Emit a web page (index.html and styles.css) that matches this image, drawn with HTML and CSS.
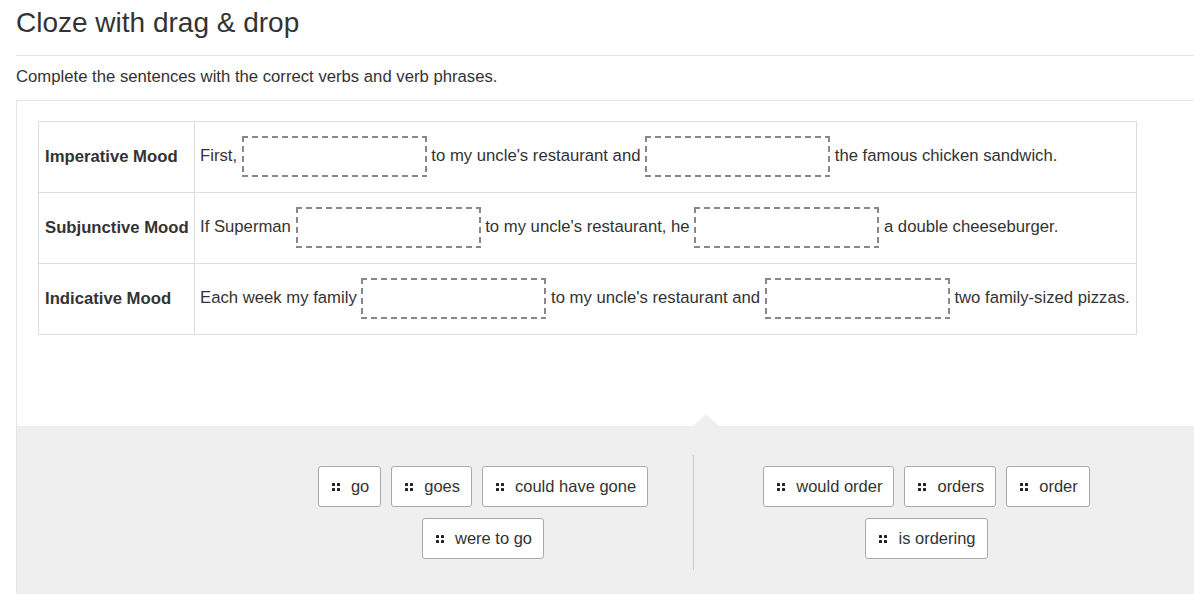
FILE: index.html
```html
<!DOCTYPE html>
<html lang="en">
<head>
  <meta charset="UTF-8">
  <title>Cloze with drag &amp; drop</title>
  <link rel="stylesheet" href="styles.css">
</head>
<body>
  <div class="page">
    <h1 class="title">Cloze with drag &amp; drop</h1>
    <p class="intro">Complete the sentences with the correct verbs and verb phrases.</p>

    <div class="task">
      <div class="task-body">
        <table class="cloze">
          <colgroup>
            <col class="label-col">
            <col>
          </colgroup>
          <tr>
            <td class="label">Imperative Mood</td>
            <td class="sentence">First, <span class="zone"></span> to my uncle's restaurant and <span class="zone"></span> the famous chicken sandwich.</td>
          </tr>
          <tr>
            <td class="label">Subjunctive Mood</td>
            <td class="sentence">If Superman <span class="zone"></span> to my uncle's restaurant, he <span class="zone"></span> a double cheeseburger.</td>
          </tr>
          <tr>
            <td class="label">Indicative Mood</td>
            <td class="sentence">Each week my family <span class="zone"></span> to my uncle's restaurant and <span class="zone"></span> two family-sized pizzas.</td>
          </tr>
        </table>
      </div>

      <div class="pool-area">
        <div class="pool pool-left">
          <span class="chip"><svg class="grip" width="8" height="9" viewBox="0 0 8 9"><rect x="0" y="1" width="3" height="3" rx="0.6"/><rect x="5" y="1" width="3" height="3" rx="0.6"/><rect x="0" y="6" width="3" height="3" rx="0.6"/><rect x="5" y="6" width="3" height="3" rx="0.6"/></svg>go</span>
          <span class="chip"><svg class="grip" width="8" height="9" viewBox="0 0 8 9"><rect x="0" y="1" width="3" height="3" rx="0.6"/><rect x="5" y="1" width="3" height="3" rx="0.6"/><rect x="0" y="6" width="3" height="3" rx="0.6"/><rect x="5" y="6" width="3" height="3" rx="0.6"/></svg>goes</span>
          <span class="chip"><svg class="grip" width="8" height="9" viewBox="0 0 8 9"><rect x="0" y="1" width="3" height="3" rx="0.6"/><rect x="5" y="1" width="3" height="3" rx="0.6"/><rect x="0" y="6" width="3" height="3" rx="0.6"/><rect x="5" y="6" width="3" height="3" rx="0.6"/></svg>could have gone</span>
          <span class="chip"><svg class="grip" width="8" height="9" viewBox="0 0 8 9"><rect x="0" y="1" width="3" height="3" rx="0.6"/><rect x="5" y="1" width="3" height="3" rx="0.6"/><rect x="0" y="6" width="3" height="3" rx="0.6"/><rect x="5" y="6" width="3" height="3" rx="0.6"/></svg>were to go</span>
        </div>
        <div class="pool pool-right">
          <span class="chip"><svg class="grip" width="8" height="9" viewBox="0 0 8 9"><rect x="0" y="1" width="3" height="3" rx="0.6"/><rect x="5" y="1" width="3" height="3" rx="0.6"/><rect x="0" y="6" width="3" height="3" rx="0.6"/><rect x="5" y="6" width="3" height="3" rx="0.6"/></svg>would order</span>
          <span class="chip"><svg class="grip" width="8" height="9" viewBox="0 0 8 9"><rect x="0" y="1" width="3" height="3" rx="0.6"/><rect x="5" y="1" width="3" height="3" rx="0.6"/><rect x="0" y="6" width="3" height="3" rx="0.6"/><rect x="5" y="6" width="3" height="3" rx="0.6"/></svg>orders</span>
          <span class="chip"><svg class="grip" width="8" height="9" viewBox="0 0 8 9"><rect x="0" y="1" width="3" height="3" rx="0.6"/><rect x="5" y="1" width="3" height="3" rx="0.6"/><rect x="0" y="6" width="3" height="3" rx="0.6"/><rect x="5" y="6" width="3" height="3" rx="0.6"/></svg>order</span>
          <span class="chip"><svg class="grip" width="8" height="9" viewBox="0 0 8 9"><rect x="0" y="1" width="3" height="3" rx="0.6"/><rect x="5" y="1" width="3" height="3" rx="0.6"/><rect x="0" y="6" width="3" height="3" rx="0.6"/><rect x="5" y="6" width="3" height="3" rx="0.6"/></svg>is ordering</span>
        </div>
      </div>
    </div>
  </div>
</body>
</html>
```

FILE: styles.css
```css
body {
  margin: 0;
  font-family: "Liberation Sans", Arial, sans-serif;
  color: #333;
  background: #fff;
  overflow: hidden;
}

.page {
  padding: 7px 0 0 16px;
}

.title {
  margin: 0;
  font-size: 28px;
  font-weight: normal;
  line-height: 31px;
  padding-bottom: 17px;
  border-bottom: 1px solid #e2e2e2;
}

.intro {
  margin: 11px 0 13px;
  font-size: 16.7px;
  line-height: 20px;
}

.task {
  width: 1380px;
  border: 1px solid #e6e6e6;
}

.task-body {
  padding: 20px 21px 91px;
}

.cloze {
  border-collapse: collapse;
  table-layout: fixed;
  width: 1099px;
}

.label-col {
  width: 156px;
}

.cloze td {
  border: 1px solid #ddd;
  padding: 14px 5px 15px;
  vertical-align: middle;
  white-space: nowrap;
  font-size: 16.7px;
  line-height: 20px;
}

.cloze td.label {
  font-weight: bold;
  padding-left: 6px;
}

.zone {
  display: inline-block;
  width: 185px;
  height: 41px;
  vertical-align: middle;
  box-sizing: border-box;
  background:
    repeating-linear-gradient(90deg, #888 0 6px, transparent 6px 10px) top left / 100% 2px no-repeat,
    repeating-linear-gradient(90deg, #888 0 6px, transparent 6px 10px) bottom left / 100% 2px no-repeat,
    repeating-linear-gradient(180deg, #888 0 6px, transparent 6px 10px) top left / 2px 100% no-repeat,
    repeating-linear-gradient(180deg, #888 0 6px, transparent 6px 10px) top right / 2px 100% no-repeat;
}

.pool-area {
  position: relative;
  display: flex;
  background: #efefef;
  padding: 29px 0 30px;
}

/* little pointer on top of the answer pool */
.pool-area::before {
  content: "";
  position: absolute;
  top: -12px;
  left: 676px;
  border-left: 13px solid transparent;
  border-right: 13px solid transparent;
  border-bottom: 12px solid #efefef;
}

.pool {
  display: flex;
  flex-wrap: wrap;
  justify-content: center;
  align-content: flex-start;
  gap: 11px 10px;
  padding: 11px 0;
}

.pool-left {
  width: 390px;
  margin-left: 271px;
}

.pool-right {
  width: 435px;
  margin-left: 15px;
  padding-left: 15px;
  padding-right: 15px;
  border-left: 1px solid #ccc;
}

.chip {
  display: inline-flex;
  align-items: center;
  gap: 11px;
  height: 41px;
  box-sizing: border-box;
  padding: 0 11px 0 13px;
  background: #fff;
  border: 1px solid #aaa;
  border-radius: 3px;
  font-size: 16.5px;
  color: #333;
}

.grip {
  fill: #222;
  flex-shrink: 0;
}
```
